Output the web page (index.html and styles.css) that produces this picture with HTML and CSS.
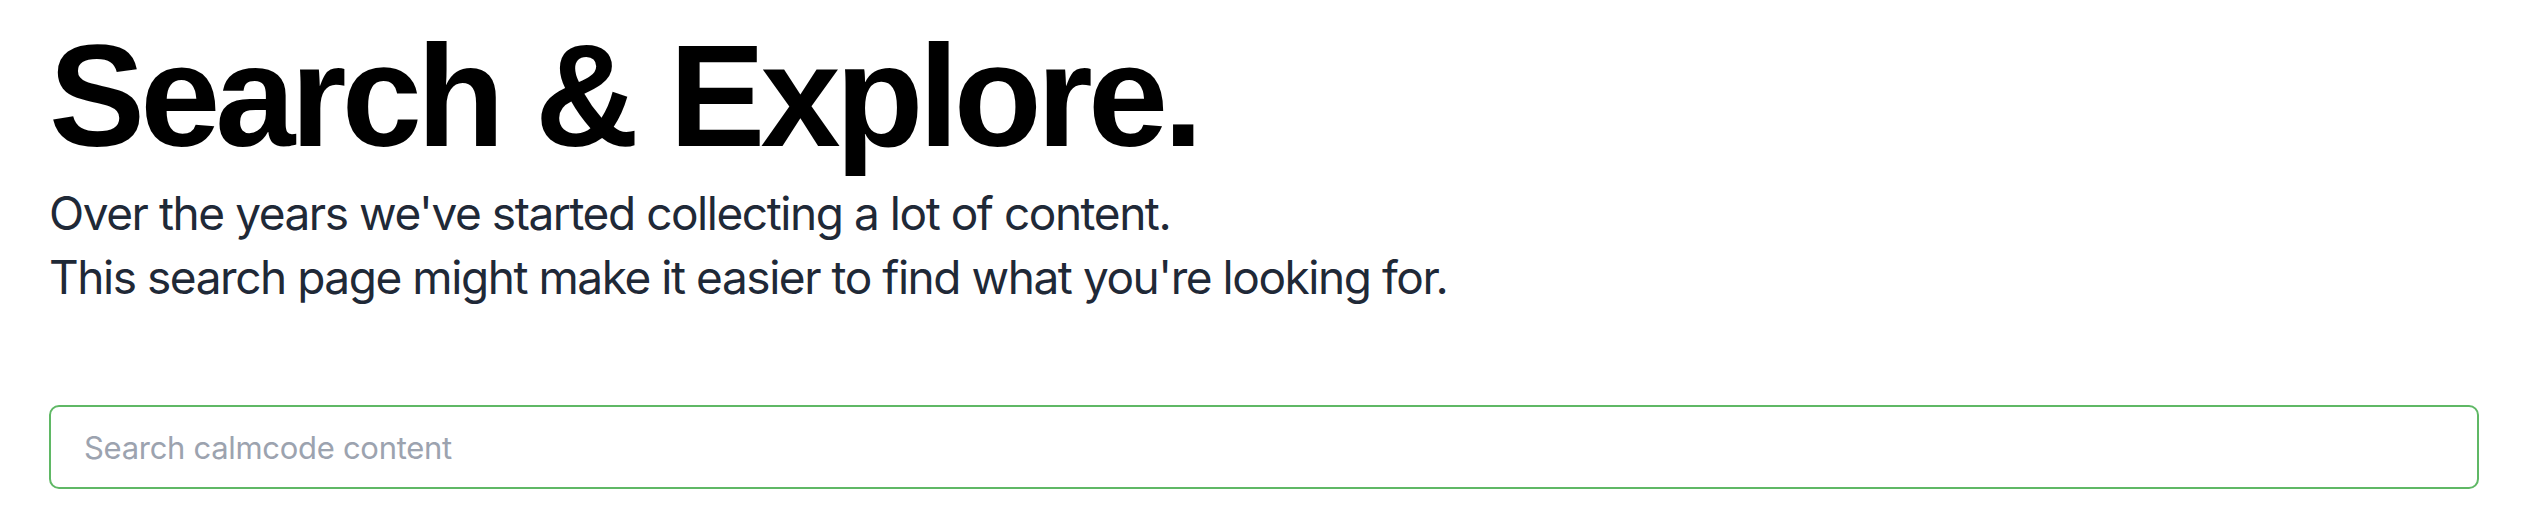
FILE: index.html
```html
<!DOCTYPE html>
<html lang="en">
<head>
<meta charset="utf-8">
<title>Search &amp; Explore</title>
<link rel="stylesheet" href="styles.css">
</head>
<body>
<main class="page">
  <header class="intro">
    <h1 class="title">Search &amp; Explore.</h1>
    <p class="lead">Over the years we've started collecting a lot of content.<br>This search page might make it easier to find what you're looking for.</p>
  </header>
  <div class="search">
    <input class="search-input" type="text" placeholder="Search calmcode content" autofocus>
  </div>
</main>
</body>
</html>
```

FILE: styles.css
```css
html, body {
  margin: 0;
  padding: 0;
  background: #ffffff;
}

.page {
  padding: 25px 67px 0 49px;
  display: flex;
  flex-direction: column;
}

.intro {
  display: flex;
  flex-direction: column;
}

.title {
  margin: 0;
  font-family: "Liberation Sans", Arial, sans-serif;
  font-weight: 700;
  font-size: 144px;
  line-height: 1;
  letter-spacing: -0.034em;
  color: #000000;
}

.lead {
  margin: 12px 0 0 0;
  font-family: Inter, "Noto Sans", sans-serif;
  font-size: 46px;
  line-height: 64px;
  letter-spacing: -1.45px;
  color: #1f2937;
}

.search {
  margin-top: 96px;
  display: flex;
}

.search-input {
  flex: 1;
  box-sizing: border-box;
  height: 84px;
  padding: 0 33px;
  border: 2px solid #5fb865;
  border-radius: 10px;
  font-family: Inter, "Noto Sans", sans-serif;
  font-size: 31px;
  letter-spacing: -0.3px;
  color: #111827;
  outline: none;
  background: #ffffff;
  caret-color: #111827;
}

.search-input::placeholder {
  color: #9ca3af;
}
```
